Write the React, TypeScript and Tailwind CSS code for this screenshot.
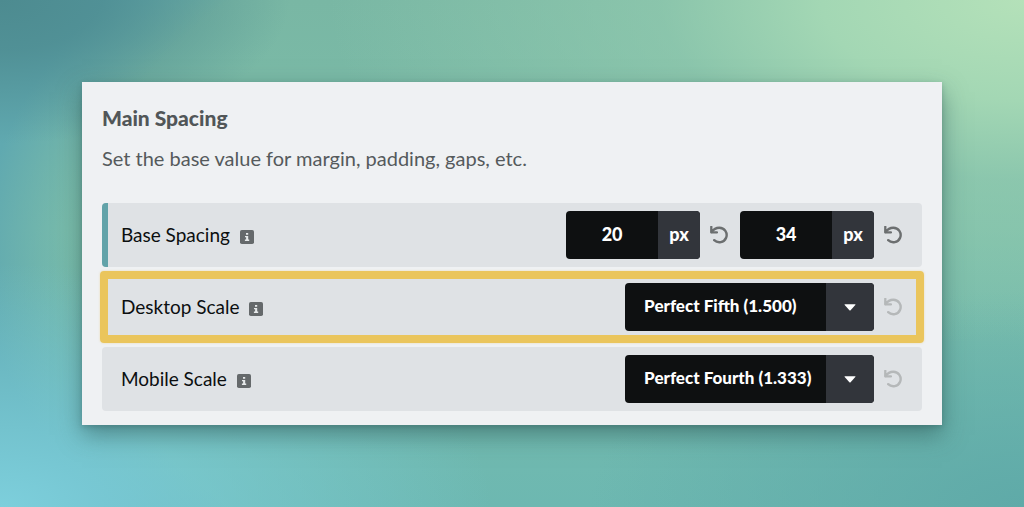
import type { ReactNode } from "react";

function InfoIcon() {
  return (
    <svg viewBox="0 0 14 14" className="mt-1 size-3.5 shrink-0" aria-hidden="true">
      <rect width="14" height="14" rx="1.8" fill="#65696b" />
      <path d="M6 3h2.2v1.8H6zM5 5.9h3.2v3.7h1V11H4.9V9.6h1.2V7.3H5z" fill="#e6e9ea" />
    </svg>
  );
}

function ResetButton({ label, muted = false }: { label: string; muted?: boolean }) {
  return (
    <button
      type="button"
      aria-label={label}
      className={muted ? "shrink-0 text-[#b5b8b9]" : "shrink-0 text-[#6c6f70]"}
    >
      <svg viewBox="0 0 18 18" className="size-[18px]" fill="none" stroke="currentColor" aria-hidden="true">
        <path d="M1.3 .8v5.6h5.6" strokeWidth="2.3" strokeLinecap="round" strokeLinejoin="round" />
        <path d="M1.8 6C3.5 3.2 6 1.7 9.3 1.7a7.3 7.3 0 1 1-5.1 12.5" strokeWidth="2.4" strokeLinecap="round" />
        <path d="M1.3 6.4V3.2l2.4 1z" fill="currentColor" strokeWidth="1" />
      </svg>
    </button>
  );
}

function NumberField({ id, label, value }: { id: string; label: string; value: string }) {
  return (
    <div className="flex items-center gap-2.5">
      <div className="flex h-12 overflow-hidden rounded-sm bg-[#0e1011] text-lg font-black text-white">
        <input
          id={id}
          aria-label={label}
          defaultValue={value}
          inputMode="numeric"
          className="w-[92px] bg-transparent pb-0.5 text-center outline-none"
        />
        <span className="flex w-[42px] items-center justify-center bg-[#32353b] pb-0.5">px</span>
      </div>
      <ResetButton label={`Reset ${label}`} />
    </div>
  );
}

function SelectField({ id, options, name }: { id: string; options: string[]; name: string }) {
  return (
    <div className="flex items-center gap-2.5">
      <div className="relative h-12 w-[249px] overflow-hidden rounded-sm bg-[#0e1011]">
        <select
          id={id}
          defaultValue={options[0]}
          className="size-full appearance-none bg-transparent pr-12 pb-0.5 pl-[19px] text-[17px] font-black text-white outline-none"
        >
          {options.map((o) => (
            <option key={o}>{o}</option>
          ))}
        </select>
        <span className="pointer-events-none absolute inset-y-0 right-0 flex w-12 items-center justify-center bg-[#32353b]">
          <svg viewBox="0 0 12 7" className="h-[7px] w-3" aria-hidden="true">
            <path d="M.9.3h10.2q.7.1.2.8L6.6 6.2q-.6.6-1.2 0L.7 1.1Q.2.4.9.3Z" fill="#fff" />
          </svg>
        </span>
      </div>
      <ResetButton label={`Reset ${name}`} muted />
    </div>
  );
}

function Row({
  label,
  htmlFor,
  accent = false,
  highlighted = false,
  children,
}: {
  label: string;
  htmlFor: string;
  accent?: boolean;
  highlighted?: boolean;
  children: ReactNode;
}) {
  return (
    <div className="relative">
      <div className="flex overflow-hidden rounded-sm bg-[#dfe2e5]">
        <span className={accent ? "w-1.5 shrink-0 bg-[#62a3a9]" : "w-1.5 shrink-0"} />
        <div className="flex grow items-center justify-between py-2 pr-5 pl-[13px]">
          <div className="flex items-center gap-2.5">
            <label htmlFor={htmlFor} className="text-[19px] leading-6 text-[#0c0f10]">
              {label}
            </label>
            <InfoIcon />
          </div>
          <div className="flex items-center gap-3">{children}</div>
        </div>
      </div>
      {highlighted && (
        <div className="pointer-events-none absolute -inset-x-0.5 -inset-y-1 rounded-sm border-8 border-[#eac55c] shadow-[0_0_2px_#eac55c80]" />
      )}
    </div>
  );
}

export default function App() {
  return (
    <main className="flex min-h-screen items-center bg-[radial-gradient(ellipse_at_0%_0%,#4d8b90_0%,#4d8b90d0_7%,#4d8b9000_20%),radial-gradient(ellipse_at_0%_100%,#7dcfdc_0%,#7dcfdc00_34%),radial-gradient(ellipse_at_100%_0%,#b4e1b9_0%,#a3d7b4_14%,#95cdb0a0_25%,#8ecbb000_48%),radial-gradient(ellipse_at_100%_100%,#5faaa8_0%,#5faaa800_30%),radial-gradient(60%_80%_at_63%_50%,#60a9b000_92%,#60a9b0_108%),linear-gradient(180deg,#79b7a4_0%,#7cbeaa_45%,#6db8b1_100%)] px-[8%] font-[Lato,sans-serif]">
      <section className="w-full bg-[#eff1f3] px-5 pt-6 pb-3.5 shadow-[0_10px_22px_#28505080,0_2px_5px_#28505040]">
        <h1 className="text-[21px] leading-6 font-black text-[#515658]">Main Spacing</h1>
        <p className="mt-4 mb-[33px] text-xl leading-6 text-[#555a5c]">
          Set the base value for margin, padding, gaps, etc.
        </p>
        <div className="flex flex-col gap-2">
          <Row label="Base Spacing" htmlFor="base-min" accent>
            <NumberField id="base-min" label="minimum base spacing" value="20" />
            <NumberField id="base-max" label="maximum base spacing" value="34" />
          </Row>
          <Row label="Desktop Scale" htmlFor="desktop-scale" highlighted>
            <SelectField
              id="desktop-scale"
              name="desktop scale"
              options={["Perfect Fifth (1.500)", "Perfect Fourth (1.333)"]}
            />
          </Row>
          <Row label="Mobile Scale" htmlFor="mobile-scale">
            <SelectField
              id="mobile-scale"
              name="mobile scale"
              options={["Perfect Fourth (1.333)", "Perfect Fifth (1.500)"]}
            />
          </Row>
        </div>
      </section>
    </main>
  );
}
